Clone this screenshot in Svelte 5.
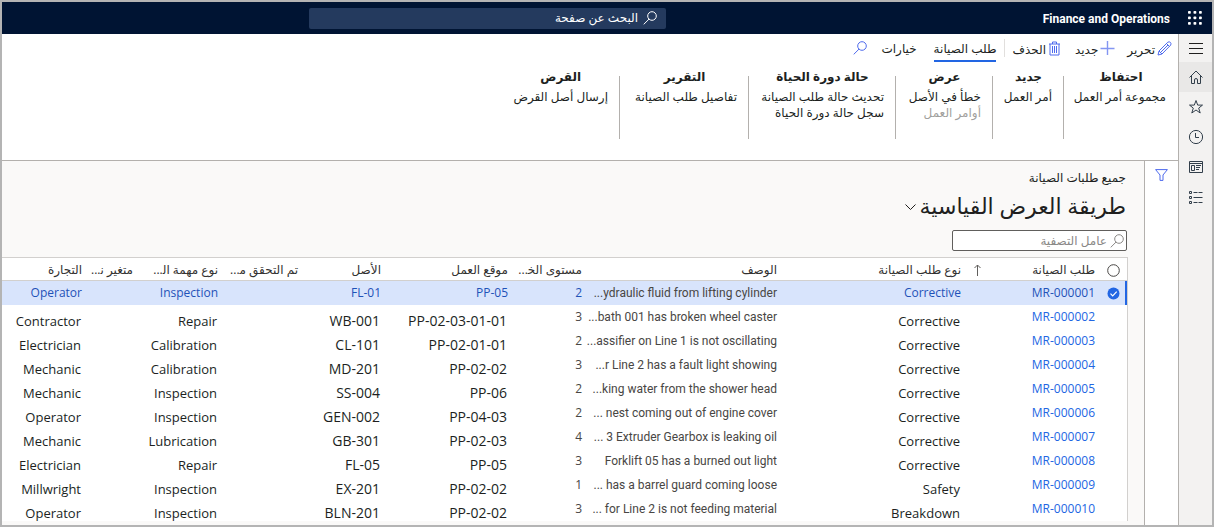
<script>
  const groups = [
    { title: 'احتفاظ', items: ['مجموعة أمر العمل'] },
    { title: 'جديد', items: ['أمر العمل'] },
    { title: 'عرض', items: ['خطأ في الأصل', 'أوامر العمل'], off: 1 },
    { title: 'حالة دورة الحياة', items: ['تحديث حالة طلب الصيانة', 'سجل حالة دورة الحياة'] },
    { title: 'التقرير', items: ['تفاصيل طلب الصيانة'] },
    { title: 'القرض', items: ['إرسال أصل القرض'] }
  ];
  const heads = [
    'طلب الصيانة', 'نوع طلب الصيانة', 'الوصف', 'مستوى الخ\u200d...', 'موقع العمل',
    'الأصل', 'تم التحقق م\u200d...', 'نوع مهمة ال\u200d...', 'متغير ن\u200d...', 'التجارة'
  ];
  const rows = [
    ['MR-000001', 'Corrective', '...ydraulic fluid from lifting cylinder', '2', 'PP-05', 'FL-01', '', 'Inspection', '', 'Operator'],
    ['MR-000002', 'Corrective', '...bath 001 has broken wheel caster', '3', 'PP-02-03-01-01', 'WB-001', '', 'Repair', '', 'Contractor'],
    ['MR-000003', 'Corrective', '...assifier on Line 1 is not oscillating', '2', 'PP-02-01-01', 'CL-101', '', 'Calibration', '', 'Electrician'],
    ['MR-000004', 'Corrective', '...r Line 2 has a fault light showing', '3', 'PP-02-02', 'MD-201', '', 'Calibration', '', 'Mechanic'],
    ['MR-000005', 'Corrective', '...king water from the shower head', '2', 'PP-06', 'SS-004', '', 'Inspection', '', 'Mechanic'],
    ['MR-000006', 'Corrective', '... nest coming out of engine cover', '2', 'PP-04-03', 'GEN-002', '', 'Inspection', '', 'Operator'],
    ['MR-000007', 'Corrective', '... 3 Extruder Gearbox is leaking oil', '4', 'PP-02-03', 'GB-301', '', 'Lubrication', '', 'Mechanic'],
    ['MR-000008', 'Corrective', 'Forklift 05 has a burned out light', '3', 'PP-05', 'FL-05', '', 'Repair', '', 'Electrician'],
    ['MR-000009', 'Safety', '... has a barrel guard coming loose', '1', 'PP-02-02', 'EX-201', '', 'Inspection', '', 'Millwright'],
    ['MR-000010', 'Breakdown', '... for Line 2 is not feeding material', '3', 'PP-02-02', 'BLN-201', '', 'Inspection', '', 'Operator']
  ];
  const small = [0, 2, 3];
</script>

{#snippet glass()}
  <svg class="glass" width="14" height="14" viewBox="0 0 14 14" aria-hidden="true"><circle cx="9" cy="5" r="4.3" /><path d="M6 8.1 .7 13.4" /></svg>
{/snippet}

<div class="app" dir="rtl">
  <header>
    <button class="waffle" aria-label="Apps">
      <svg width="14" height="14" viewBox="0 0 14 14">
        {#each [0, 5.5, 11] as y}{#each [0, 5.5, 11] as x}<rect {x} {y} width="2.8" height="2.8" rx=".8" fill="#fff" />{/each}{/each}
      </svg>
    </button>
    <strong>Finance and Operations</strong>
    <label class="pagefind">{@render glass()}<input aria-label="البحث عن صفحة" placeholder="البحث عن صفحة" /></label>
  </header>

  <div class="body">
    <nav class="rail">
      <button aria-label="القائمة"><svg width="16" height="16" viewBox="0 0 16 16"><path d="M1 3.500h14M1 8.500h14M1 13.500h14" stroke="#201f1e" /></svg></button>
      <button class="on" aria-label="الصفحة الرئيسية"><svg width="16" height="16" viewBox="0 0 16 16"><path d="M1.500 8.500 8 2l6.500 6.500M3.500 7v7.500h3V11q0-1.500 1.500-1.500T9.500 11v3.500h3V7" /></svg></button>
      <button aria-label="المفضلة"><svg width="16" height="16" viewBox="0 0 16 16"><path d="m8 1.500 1.700 4.600h4.800l-3.800 3 1.500 4.900L8 11l-4.200 3 1.500-4.900-3.800-3h4.800z" /></svg></button>
      <button aria-label="الأخيرة"><svg width="16" height="16" viewBox="0 0 16 16"><circle cx="8" cy="8" r="6.600" /><path d="M7.500 4v4.500H11" /></svg></button>
      <button aria-label="مساحات العمل"><svg width="16" height="16" viewBox="0 0 16 16"><path d="M1.500 2.500h13v11h-13zM1.500 4.500h13M3.500 6.500h3v5h-3zM8 6.500h5M8 8.500h4M8 10.500h3" /></svg></button>
      <button aria-label="الوحدات النمطية"><svg width="16" height="16" viewBox="0 0 16 16"><path d="M1.500 2.500h2v2h-2zM1.500 7.500h2v2h-2zM1.500 12.500h2v2h-2zM5.500 3.500h4M10.500 3.500h4M5.500 8.500h9M5.500 13.500h4M10.500 13.500h4" /></svg></button>
    </nav>

    <div class="page">
      <section class="ribbon">
        <div class="bar">
          <button class="edit"><svg width="15" height="15" viewBox="0 0 15 15"><path d="M1 14 2 10 10.800 1.200q1.500-.9 2.600.2t.3 2.700L5 13zM2 10l3 3M9.500 2.500l3 3M3.600 11.400l7.400-7.400" /></svg>تحرير</button>
          <button class="new"><svg width="15" height="15" viewBox="0 0 15 15"><path d="M7.500 0v14M.5 7.500h14" stroke-width="1.400" /></svg>جديد</button>
          <button class="del"><svg width="13" height="15" viewBox="0 0 13 15"><path d="M1 3h11M4.500 3V1h4v2M2 3v11h9V3M4.500 5v7M6.500 5v7M8.500 5v7" /></svg>الحذف</button>
          <span class="rule"></span>
          <button class="tab active">طلب الصيانة</button>
          <button class="tab">خيارات</button>
          <button class="find" aria-label="بحث">{@render glass()}</button>
        </div>
        <div class="groups">
          {#each groups as g}
            <div class="group">
              <h2>{g.title}</h2>
              {#each g.items as item, i}<button disabled={g.off === i}>{item}</button>{/each}
            </div>
          {/each}
        </div>
      </section>

      <div class="work">
        <aside>
          <button aria-label="تصفية"><svg width="13" height="12" viewBox="0 0 13 12"><path d="M.6.6h11.800L8 6v5.400H5V6z" /></svg></button>
        </aside>
        <main>
          <div class="crumb">جميع طلبات الصيانة</div>
          <h1>طريقة العرض القياسية<svg width="11" height="7" viewBox="0 0 11 7"><path d="m.5.5 5 5 5-5" /></svg></h1>
          <label class="quick">{@render glass()}<input aria-label="عامل التصفية" placeholder="عامل التصفية" /></label>
          <table>
            <colgroup>
              <col class="w0" /><col class="w1" /><col class="w2" /><col class="w3" /><col class="w4" /><col class="w5" />
              <col class="w6" /><col class="w7" /><col class="w8" /><col class="w9" /><col />
            </colgroup>
            <thead>
              <tr>
                <th><svg class="mark" width="13" height="13" viewBox="0 0 13 13"><circle cx="6.500" cy="6.500" r="5.800" fill="#fff" stroke="#484644" /></svg></th>
                {#each heads as h, i}
                  <th>
                    {#if i === 0}
                      <span class="sorted">{h}<svg width="7" height="12" viewBox="0 0 7 12"><path d="M3.500 12V1M.5 4l3-3 3 3" /></svg></span>
                    {:else}{h}{/if}
                  </th>
                {/each}
              </tr>
            </thead>
            <tbody>
              {#each rows as r, n}
                <tr class:selected={n === 0}>
                  <td>
                    {#if n === 0}
                      <svg class="mark" width="13" height="13" viewBox="0 0 13 13"><circle cx="6.500" cy="6.500" r="6" fill="#2266e3" /><path d="m3.500 6.600 2.200 2.200 4-4.200" fill="none" stroke="#fff" stroke-width="1.200" /></svg>
                    {/if}
                  </td>
                  {#each r as cell, i}
                    <td class:large={n > 0 && !small.includes(i)} class:code={n > 0 && (i === 4 || i === 5)} class:desc={i === 2} class:digit={n > 0 && i === 3}>
                      {#if i === 0}<a href="#{cell}">{cell}</a>{:else}<bdi>{cell}</bdi>{/if}
                    </td>
                  {/each}
                </tr>
              {/each}
            </tbody>
          </table>
        </main>
      </div>
    </div>
  </div>
</div>

<style>
  :global(body) { margin: 0; }
  .app {
    box-sizing: border-box;
    min-height: 100vh;
    display: flex;
    flex-direction: column;
    border: 2px solid #b4b4b4;
    background: #fff;
    color: #201f1e;
    font: 12px/16px "Open Sans", "DejaVu Sans", sans-serif;
  }
  button, input { font: inherit; color: inherit; background: none; border: 0; padding: 0; margin: 0; }
  button { display: flex; align-items: center; white-space: nowrap; cursor: pointer; }
  svg { flex: none; fill: none; stroke: currentColor; }
  .waffle svg { stroke: none; }
  header { height: 32px; display: flex; align-items: center; background: #001433; color: #fff; }
  .waffle { width: 34px; justify-content: center; }
  header strong { margin-inline-start: 8px; padding-top: 2px; font-family: Roboto, sans-serif; font-weight: 700; }
  .pagefind {
    width: 357px; height: 21px; box-sizing: border-box; padding: 0 9px;
    margin-inline: auto 307px;
    display: flex; align-items: center; gap: 5px;
    background: #243a5e; border-radius: 2px;
  }
  input { flex: 1; min-width: 0; outline: 0; }
  input::placeholder { color: inherit; opacity: 1; }
  .body { flex: 1; display: flex; }
  .rail { width: 33px; border-inline-end: 1px solid #b3b0ad; background: #f3f2f1; }
  .rail button { width: 100%; height: 30px; justify-content: center; color: #323f4b; }
  .rail button:first-child { height: 28px; }
  .rail .on { background: #e9e8e7; }
  .page { flex: 1; min-width: 0; display: flex; flex-direction: column; }
  .ribbon { height: 126px; border-bottom: 1px solid #b3b0ad; }
  .bar { display: flex; height: 28px; padding-inline-start: 6px; align-items: stretch; }
  .bar button { gap: 2px; padding-top: 4px; }
  .bar svg { color: #4f6bed; align-self: flex-start; margin-top: 3px; }
  .new { margin-inline-start: 12px; }
  .new svg { opacity: .7; }
  .del { margin-inline-start: 14px; }
  .rule { border-inline-start: 1px solid #e1dfdd; margin: 5px 7px 5px 8px; }
  .tab { border-bottom: 2px solid transparent; }
  .tab + .tab { margin-inline-start: 17px; }
  .tab.active { border-color: #2266e3; }
  .bar .find { margin-inline-start: 14px; }
  .groups { display: grid; grid-template-columns: 114px 71px 97px 147px 129px auto; justify-content: start; margin-top: 6px; }
  .group { height: 71px; padding: 0 12px; position: relative; }
  .group + .group::before { content: ""; position: absolute; inset-inline-start: 0; top: 8px; height: 63px; border-inline-start: 1px solid #b3b0ad; }
  h2 { margin: 0 0 4px; font-size: 12px; line-height: 17px; text-align: center; font-weight: 700; white-space: nowrap; }
  .group button:disabled { color: #a19f9d; }
  .work { flex: 1; display: flex; }
  aside { width: 33px; border-inline-end: 1px solid #b3b0ad; }
  aside button { width: 100%; justify-content: center; padding-top: 8px; color: #4f6bed; }
  main { flex: 1; min-width: 0; background: #faf9f8; padding-top: 9px; }
  .crumb { margin-inline-start: 18px; }
  h1 { display: flex; align-items: center; gap: 4px; margin: 3px 18px 9px; font-size: 22px; line-height: 32px; font-weight: 400; }
  h1 svg { margin-top: 4px; }
  .quick {
    width: 175px; height: 21px; box-sizing: border-box; margin-inline-start: 17px; padding: 0 2px;
    display: flex; align-items: center; gap: 3px;
    background: #fff; border: 1px solid #605e5c; border-radius: 2px; color: #8a8886;
  }
  table {
    width: calc(100% - 16px); margin: 6px 16px 0 0; table-layout: fixed; border-collapse: separate; border-spacing: 0;
    background: #fff; border-top: 1px solid #d2d0ce; border-inline-start: 1px solid #d2d0ce;
  }
  .w0 { width: 32px; } .w1 { width: 134px; } .w2 { width: 184px; } .w3 { width: 195px; } .w4 { width: 74px; }
  .w5 { width: 127px; } .w6 { width: 83px; } .w7 { width: 80px; } .w8 { width: 85px; } .w9 { width: 51px; }
  th, td { padding: 0; height: 24px; line-height: 24px; text-align: start; font-weight: 400; white-space: nowrap; vertical-align: middle; }
  th { height: 20px; line-height: 20px; padding-top: 2px; border-bottom: 1px solid #d2d0ce; color: #323130; }
  .sorted { display: flex; justify-content: space-between; align-items: center; padding-inline-end: 13px; }
  .sorted svg { color: #605e5c; }
  .mark { display: block; margin-inline-start: 7px; stroke: none; }
  .selected td { background: #d8e4fc; color: #1f52b8; }
  .selected td:first-child { border-inline-start: 2px solid #2266e3; }
  .selected .mark { margin-inline-start: 5px; }
  td a { color: #2266e3; text-decoration: none; }
  .selected td a { color: #1f52b8; }
  .large { padding-top: 8px; padding-inline-start: 1px; height: 16px; line-height: 16px; font-size: 13px; }
  .code { font-size: 14px; }
  .digit { color: #484644; }
  td.desc { font-family: Roboto, sans-serif; color: #484644; }
  .selected td.desc { color: #484644; }
</style>
